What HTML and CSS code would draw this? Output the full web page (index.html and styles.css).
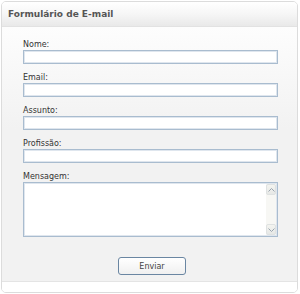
FILE: index.html
```html
<!DOCTYPE html>
<html lang="pt">
<head>
    <meta charset="UTF-8">
    <title>Formulário de E-mail</title>
    <link rel="stylesheet" href="styles.css">
</head>
<body>
    <div class="panel">
        <div class="panel-head">Formulário de E-mail</div>
        <form class="panel-body">
            <label class="field">Nome:<input type="text"></label>
            <label class="field">Email:<input type="text"></label>
            <label class="field">Assunto:<input type="text"></label>
            <label class="field">Profissão:<input type="text"></label>
            <label class="field">Mensagem:
                <span class="msg-box">
                    <textarea></textarea>
                    <span class="scrollbar">
                        <span class="arrow">
                            <svg width="7" height="4" viewBox="0 0 7 4"><path d="M0.5 3.5 L3.5 0.5 L6.5 3.5" fill="none" stroke="#9aa5b0" stroke-width="1"/></svg>
                        </span>
                        <span class="track"></span>
                        <span class="arrow">
                            <svg width="7" height="4" viewBox="0 0 7 4"><path d="M0.5 0.5 L3.5 3.5 L6.5 0.5" fill="none" stroke="#9aa5b0" stroke-width="1"/></svg>
                        </span>
                    </span>
                </span>
            </label>
            <div class="actions">
                <button type="button">Enviar</button>
            </div>
        </form>
        <div class="panel-foot"></div>
    </div>
</body>
</html>
```
FILE: styles.css
```css
body {
    margin: 0;
    padding: 1px 2px 1px 1px;
    font-family: "DejaVu Sans", Verdana, sans-serif;
    background: #fff;
}
.panel {
    border: 1px solid #dcdcdc;
    border-radius: 5px;
    overflow: hidden;
    height: 290px;
    display: flex;
    flex-direction: column;
}
.panel-head {
    height: 24px;
    line-height: 25px;
    padding-left: 6px;
    font-size: 9px;
    font-weight: bold;
    color: #555;
    background: linear-gradient(#ffffff, #f6f6f6 50%, #e9e9e9);
    border-bottom: 1px solid #e2e2e2;
}
.panel-body {
    flex: 1;
    margin: 0;
    padding: 13px 19px 0 21px;
    background: linear-gradient(#fdfdfd, #f2f2f2 40%, #f2f2f2);
    border-bottom: 1px solid #e4e4e4;
    display: flex;
    flex-direction: column;
    gap: 9px;
}
.field {
    display: flex;
    flex-direction: column;
    font-size: 8px;
    color: #333;
    line-height: 10px;
}
.field input {
    margin: 0;
    box-sizing: border-box;
    width: 100%;
    height: 14px;
    border: 1px solid #a9bccf;
    box-shadow: inset 0 0 0 1px #dfe6ee;
    background: #fff;
    padding: 0 3px;
    font-size: 9px;
}
.msg-box {
    display: flex;
    height: 55px;
    box-sizing: border-box;
    border: 1px solid #a9bccf;
    box-shadow: inset 0 0 0 1px #dfe6ee;
    background: #fff;
    padding: 1px;
}
.msg-box textarea {
    flex: 1;
    margin: 0;
    border: none;
    resize: none;
    outline: none;
    background: transparent;
    font-size: 9px;
}
.scrollbar {
    width: 10px;
    display: flex;
    flex-direction: column;
    background: #f7f7f4;
}
.arrow {
    height: 9px;
    display: flex;
    align-items: center;
    justify-content: center;
    background: linear-gradient(#f4f4f0, #e6e8e6);
    border: 1px solid #dfe2e2;
    border-radius: 2px;
}
.track {
    flex: 1;
}
.actions {
    display: flex;
    justify-content: center;
    margin-top: 11px;
}
.actions button {
    width: 68px;
    height: 18px;
    margin-left: 3px;
    border: 1px solid #6a86a2;
    border-radius: 3px;
    background: linear-gradient(#ffffff, #f0f0f0);
    font-family: "DejaVu Sans", Verdana, sans-serif;
    font-size: 8px;
    color: #444;
    padding: 0;
}
.panel-foot {
    height: 10px;
    background: #fff;
}
```
